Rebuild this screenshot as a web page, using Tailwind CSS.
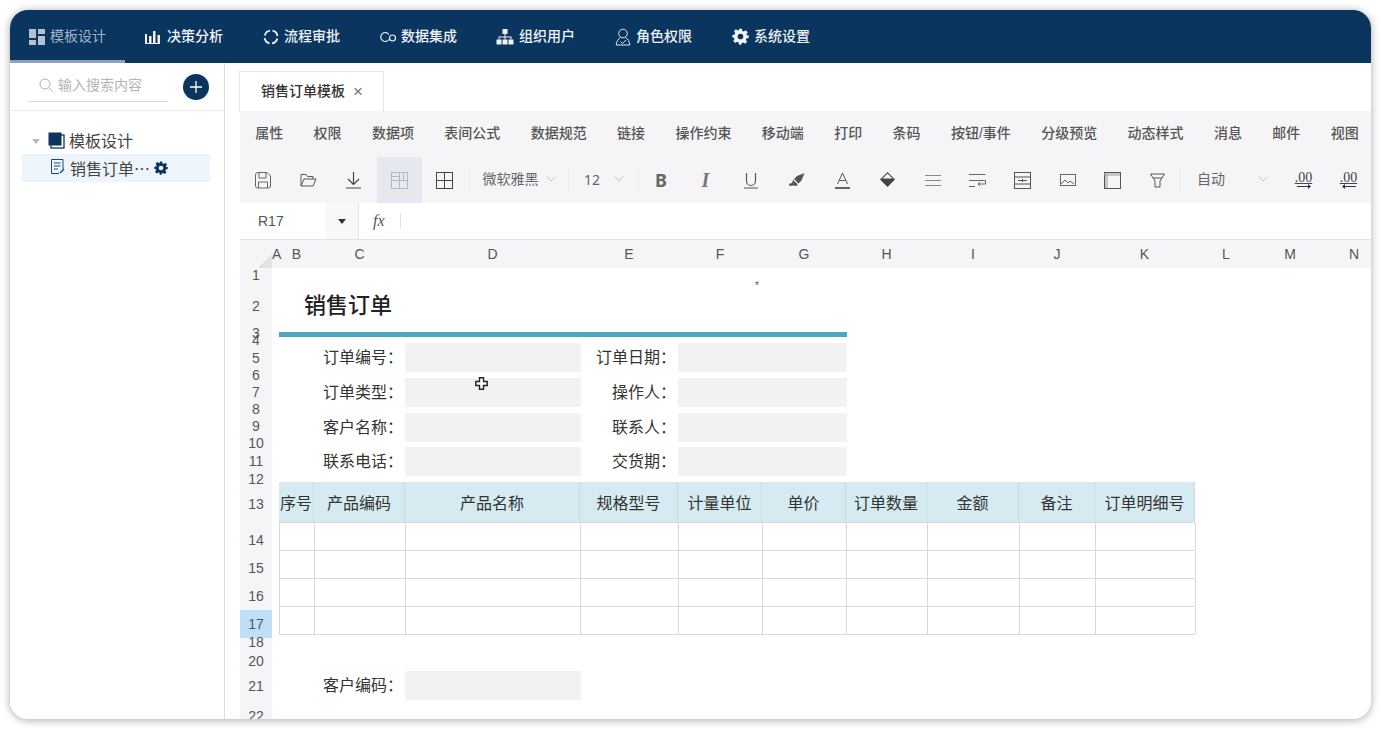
<!doctype html>
<html lang="zh">
<head>
<meta charset="utf-8">
<script src="https://cdn.jsdelivr.net/npm/@tailwindcss/browser@4"></script>
</head>
<body class="bg-white overflow-hidden font-['Liberation_Sans','Noto_Sans_CJK_SC',sans-serif]">
<div class="w-[1382px] h-[733px] pl-[10px] pt-[10px] overflow-hidden">
<div class="w-[1361px] h-[709px] rounded-[18px] overflow-hidden bg-white shadow-[0_1px_9px_rgba(0,0,0,0.35)] flex flex-col relative">

<!-- top nav -->
<header class="h-[53px] shrink-0 bg-[#0a355f] flex text-[14px] font-medium text-[#eef2f6]">
  <div class="w-[115px] border-b-[3px] border-[#8fa2b8] flex items-center pl-[19px] pt-[3px] gap-[5px] text-[#a4b4c6] font-normal">
    <svg class="w-[16px] h-[16px]" viewBox="0 0 16 16" fill="#b5c1ce"><rect width="7" height="9"/><rect x="9" width="7" height="5"/><rect y="11" width="7" height="5"/><rect x="9" y="7" width="7" height="9"/></svg>
    <span>模板设计</span>
  </div>
  <div class="w-[117px] flex items-center pl-[20px] gap-[6px]">
    <svg class="w-[16px] h-[14px]" viewBox="0 0 16 14" fill="#eef2f6"><rect x="0" y="4" width="2" height="9"/><rect x="4" y="6" width="2.5" height="7"/><rect x="8" y="1" width="2.5" height="12"/><rect x="12.500" y="5" width="2.500" height="8"/><rect x="0" y="13" width="15" height="1"/></svg>
    <span>决策分析</span>
  </div>
  <div class="w-[117px] flex items-center pl-[21px] gap-[5px]">
    <svg class="w-[16px] h-[16px]" viewBox="0 0 16 16" fill="none" stroke="#eef2f6" stroke-width="1.800"><path d="M9.500 1.700A6.500 6.500 0 0 1 14.500 7M14.300 9.500A6.500 6.500 0 0 1 9 14.400M6.500 14.300A6.500 6.500 0 0 1 1.600 9M1.800 6.500A6.500 6.500 0 0 1 7 1.600"/></svg>
    <span>流程审批</span>
  </div>
  <div class="w-[117px] flex items-center pl-[20px] gap-[4px]">
    <svg class="w-[18px] h-[12px]" viewBox="0 0 18 12" fill="none" stroke="#eef2f6" stroke-width="1.200"><path d="M10 8.500A4.500 4.500 0 1 1 10 3.500"/><circle cx="13.500" cy="7" r="3"/></svg>
    <span>数据集成</span>
  </div>
  <div class="w-[119px] flex items-center pl-[20px] gap-[5px]">
    <svg class="w-[18px] h-[16px]" viewBox="0 0 18 16" fill="#eef2f6"><rect x="6.500" y="0" width="5" height="5"/><rect x="0.500" y="10.500" width="5" height="5"/><rect x="6.500" y="10.500" width="5" height="5"/><rect x="12.500" y="10.500" width="5" height="5"/><path d="M8.500 5h1v2.500H15.500V10.500h-1V8.500H9.500v2h-1v-2H3.500v2h-1V7.500H8.500z"/></svg>
    <span>组织用户</span>
  </div>
  <div class="w-[116px] flex items-center pl-[20px] gap-[5px]">
    <svg class="w-[16px] h-[18px]" viewBox="0 0 16 18" fill="none" stroke="#dfe6ee" stroke-width="1"><circle cx="8" cy="5.500" r="4.300"/><path d="M5.500 9.500C3 11 1.500 13.500 1.200 17H14.800C14.500 13.500 13 11 10.500 9.500"/><path d="M5.500 13.500l2 2 3.500-3.500"/></svg>
    <span>角色权限</span>
  </div>
  <div class="flex items-center pl-[21px] gap-[5px]">
    <svg class="w-[17px] h-[17px]" viewBox="0 0 24 24" fill="#f2f5f8"><path fill-rule="evenodd" d="M10 1h4l.7 3.200 1.900.8 2.800-1.800 2.800 2.800-1.800 2.800.8 1.900L23.500 10v4l-3.200.7-.8 1.900 1.800 2.800-2.800 2.800-2.800-1.800-1.900.8L13 23.500h-3l-.7-3.200-1.900-.8-2.800 1.800-2.800-2.800 1.800-2.800-.8-1.900L.5 13.500v-3.500l3.200-.7.8-1.900-1.800-2.800 2.800-2.800 2.800 1.800 1.900-.8zM12 8a4 4 0 1 0 0 8 4 4 0 0 0 0-8z"/></svg>
    <span>系统设置</span>
  </div>
</header>

<div class="flex flex-1 min-h-0">
  <!-- sidebar -->
  <aside class="w-[215px] shrink-0 border-r border-[#dcdcdc] bg-white">
    <div class="h-[48px] border-b border-[#ececec] flex items-center pl-[18px]">
      <div class="w-[140px] h-[30px] border-b border-[#d9d9d9] flex items-center pl-[11px] pb-[2px] gap-[5px] text-[14px] text-[#b4b4b4]">
        <svg class="w-[14px] h-[14px]" viewBox="0 0 14 14" fill="none" stroke="#b0b0b0" stroke-width="1"><circle cx="6" cy="6" r="5"/><path d="M9.800 9.800L13.500 13.500"/></svg>
        <span>输入搜索内容</span>
      </div>
      <div class="ml-[15px] w-[26px] h-[26px] rounded-full bg-[#0a355f] flex items-center justify-center">
        <svg class="w-[12px] h-[12px]" viewBox="0 0 12 12" stroke="#fff" stroke-width="1.300"><path d="M6 0V12M0 6H12"/></svg>
      </div>
    </div>
    <div class="pt-[16px] pl-[12px] text-[#444] text-[16px] leading-none">
      <div class="h-[27px] flex items-center pl-[10px] pt-[2px]">
        <span class="w-0 h-0 border-x-[4px] border-x-transparent border-t-[5px] border-t-[#b5b5b5]"></span>
        <svg class="ml-[8px] w-[17px] h-[17px] -mt-[3px]" viewBox="0 0 17 17"><rect x="3" y="3" width="13" height="13" fill="none" stroke="#0a355f" stroke-width="1.300"/><rect x="0.500" y="0.500" width="13" height="13" fill="#0a355f"/></svg>
        <span class="ml-[4px] mt-[1px]">模板设计</span>
      </div>
      <div class="w-[188px] h-[28px] bg-[#eef4fb] flex items-center pl-[28px] text-[16px]">
        <svg class="w-[16px] h-[17px] -mt-[3px]" viewBox="0 0 16 17" fill="none" stroke="#23486e" stroke-width="1"><path d="M13 11V1.500H1.500V15.500H9"/><path d="M4 5H10.500M4 8H10.500M4 11H8"/><path d="M10 15l4-4" stroke-width="1.500"/></svg>
        <span class="ml-[4px] font-['Noto_Sans_CJK_SC',sans-serif]">销售订单…</span>
        <svg class="ml-[4px] w-[14px] h-[14px]" viewBox="0 0 24 24" fill="#0a355f"><path fill-rule="evenodd" d="M10 1h4l.7 3.200 1.900.8 2.800-1.800 2.800 2.800-1.800 2.800.8 1.900L23.500 10v4l-3.200.7-.8 1.900 1.800 2.800-2.800 2.800-2.800-1.800-1.900.8L13 23.500h-3l-.7-3.200-1.900-.8-2.800 1.800-2.800-2.800 1.800-2.800-.8-1.900L.5 13.500v-3.500l3.200-.7.8-1.900-1.800-2.800 2.800-2.800 2.800 1.800 1.900-.8zM12 8a4 4 0 1 0 0 8 4 4 0 0 0 0-8z"/></svg>
      </div>
    </div>
  </aside>

  <!-- main -->
  <main class="flex-1 min-w-0 pl-[15px] flex flex-col overflow-hidden">
    <!-- tab bar -->
    <div class="h-[48px] shrink-0 pt-[8px] flex">
      <div class="w-[145px] h-[40px] -ml-px border border-b-0 border-[#e6e6e6] flex items-center pl-[21px] text-[14px] font-medium text-[#333]">
        <span>销售订单模板</span>
        <span class="ml-[8px] text-[#777] text-[17px] leading-none font-normal">×</span>
      </div>
    </div>
    <!-- toolbar tabs -->
    <div class="h-[46px] shrink-0 bg-[#f5f5f7] flex items-center pb-[2px] text-[14px] text-[#555] font-medium whitespace-nowrap">
      <span class="px-[15.200px]">属性</span>
      <span class="px-[15.200px]">权限</span>
      <span class="px-[15.200px]">数据项</span>
      <span class="px-[15.200px]">表间公式</span>
      <span class="px-[15.200px]">数据规范</span>
      <span class="px-[15.200px]">链接</span>
      <span class="px-[15.200px]">操作约束</span>
      <span class="px-[15.200px]">移动端</span>
      <span class="px-[15.200px]">打印</span>
      <span class="px-[15.200px]">条码</span>
      <span class="px-[15.200px]">按钮/事件</span>
      <span class="px-[15.200px]">分级预览</span>
      <span class="px-[15.200px]">动态样式</span>
      <span class="px-[15.200px]">消息</span>
      <span class="px-[15.200px]">邮件</span>
      <span class="px-[15.200px]">视图</span>
    </div>
    <!-- toolbar icons -->
    <div class="h-[46px] shrink-0 bg-[#f5f5f7] flex text-[14px] text-[#666] whitespace-nowrap">
      <div class="w-[45.500px] flex items-center justify-center"><svg class="w-[16px] h-[17px]" viewBox="0 0 16 17" fill="none" stroke="#666"><path d="M3 .500H12L15.500 4V14a2 2 0 0 1-2 2H2.500a2 2 0 0 1-2-2V3a2.500 2.500 0 0 1 2.500-2.500z"/><path d="M4 1V6H11V1M3.500 16V10H12.500V16"/></svg></div>
      <div class="w-[45.500px] flex items-center justify-center"><svg class="w-[17px] h-[14px]" viewBox="0 0 17 14" fill="none" stroke="#555"><path d="M1 13V1.500H6L7.500 3.500H13V6M1 13H13L16 6H4z"/></svg></div>
      <div class="w-[45.500px] flex items-center justify-center"><svg class="w-[17px] h-[18px]" viewBox="0 0 17 18" fill="none" stroke="#444" stroke-width="1.200"><path d="M8.500 1V13M3 8l5.500 5.500L14 8M1 17H16"/></svg></div>
      <div class="w-[45px] bg-[#e6e8ef] flex items-center justify-center"><svg class="w-[17px] h-[17px]" viewBox="0 0 17 17" fill="none" stroke="#b4b8c0"><rect x=".500" y=".500" width="16" height="16"/><path d="M.500 8.500H16.500M8.500 .500V16.500M12.500 .500V8.500M.500 4.500H8.500"/></svg></div>
      <div class="w-[45px] flex items-center justify-center"><svg class="w-[17px] h-[17px]" viewBox="0 0 17 17" fill="none" stroke="#444"><rect x=".500" y=".500" width="16" height="16"/><path d="M.500 8.500H16.500M8.500 .500V16.500"/></svg></div>
      <div class="w-[101.500px] flex items-center pl-[13px] border-l border-[#ececee] my-[11px] pb-[2px] ml-[2px] -mr-[2px]">
        <span>微软雅黑</span>
        <svg class="ml-[7px] w-[10px] h-[6px]" viewBox="0 0 10 6" fill="none" stroke="#c4c4c4"><path d="M.500 .500L5 5l4.500-4.500"/></svg>
      </div>
      <div class="w-[70px] flex items-center pl-[15px] border-l border-[#ececee] my-[11px] pb-[2px]">
        <span class="text-[14px] font-['Noto_Sans',sans-serif]">12</span>
        <svg class="ml-[14px] w-[10px] h-[6px]" viewBox="0 0 10 6" fill="none" stroke="#c4c4c4"><path d="M.500 .500L5 5l4.500-4.500"/></svg>
      </div>
      <div class="w-[45px] flex items-center justify-center text-[18px] font-bold text-[#666] font-['Noto_Sans',sans-serif] border-l border-[#ececee] my-[11px]">B</div>
      <div class="w-[45px] flex items-center justify-center text-[20px] italic font-bold text-[#777] font-['Liberation_Serif',serif]">I</div>
      <div class="w-[45px] flex items-center justify-center"><svg class="w-[14px] h-[17px]" viewBox="0 0 14 17" fill="none" stroke="#555" stroke-width="1.200"><path d="M2.500 1V9a4.500 4.500 0 0 0 9 0V1M0 16H14"/></svg></div>
      <div class="w-[47px] flex items-center justify-center"><svg class="w-[16px] h-[15px]" viewBox="0 0 16 15" fill="#555"><path d="M15.500 0L8 3 5 6l4.500 4.500 3-3zM4 7l-1 3-3 1 .500 2 4-.500 3.500.500L8.500 11z"/></svg></div>
      <div class="w-[45px] flex items-center justify-center"><svg class="w-[15px] h-[17px]" viewBox="0 0 15 17" fill="none" stroke="#555"><path d="M2.500 12L7.500 1l5 11M4.500 8.500H10.500"/><path d="M0 16H15" stroke="#333" stroke-width="1.300"/></svg></div>
      <div class="w-[45px] flex items-center justify-center"><svg class="w-[16px] h-[16px]" viewBox="0 0 16 16"><path d="M7.500 0L15 7.500 7.500 15 0 7.500z" fill="#444"/><path d="M2.500 6.500L7.500 1.500l5 5z" fill="#f5f5f7"/></svg></div>
      <div class="w-[45px] flex items-center justify-center"><svg class="w-[16px] h-[11px]" viewBox="0 0 16 11" stroke="#888"><path d="M0 .500H16M0 5.500H16M0 10.500H16"/></svg></div>
      <div class="w-[45px] flex items-center justify-center"><svg class="w-[17px] h-[13px]" viewBox="0 0 17 13" fill="none" stroke="#666"><path d="M0 .500H16.500M0 6.500H16.500V10H9M11 8L9 10l2 2M0 12.500H6"/></svg></div>
      <div class="w-[45px] flex items-center justify-center"><svg class="w-[17px] h-[17px]" viewBox="0 0 17 17" fill="none" stroke="#555"><rect x=".500" y=".500" width="16" height="16"/><path d="M.500 5H16.500M.500 12H16.500M4 8.500H13M8.500 7V10"/></svg></div>
      <div class="w-[45px] flex items-center justify-center"><svg class="w-[16px] h-[12px]" viewBox="0 0 16 12" fill="none" stroke="#666"><rect x=".500" y=".500" width="15" height="11"/><path d="M1 10l4-4 3 3 2-2 4 3"/></svg></div>
      <div class="w-[45px] flex items-center justify-center"><svg class="w-[17px] h-[17px]" viewBox="0 0 17 17" fill="none" stroke="#555"><rect x=".500" y=".500" width="16" height="16"/><path d="M.500 2.500H16.500M2.500 2.500V16.500" stroke-width="3" stroke="#999" stroke-dasharray="1 1"/></svg></div>
      <div class="w-[45px] flex items-center justify-center"><svg class="w-[15px] h-[15px]" viewBox="0 0 15 15" fill="none" stroke="#555"><path d="M.500 1H14.500L10 8V14H5V8zM3 5H12"/></svg></div>
      <div class="w-[101px] flex items-center pl-[16px] border-l border-[#ececee] my-[11px] pb-[2px]">
        <span>自动</span>
        <svg class="ml-[33px] w-[10px] h-[6px]" viewBox="0 0 10 6" fill="none" stroke="#c4c4c4"><path d="M.500 .500L5 5l4.500-4.500"/></svg>
      </div>
      <div class="w-[45px] flex flex-col items-center justify-center text-[14px] text-[#444] leading-[13px] font-['Liberation_Serif',serif]"><span class="underline">.00</span><svg class="w-[14px] h-[5px]" viewBox="0 0 14 5" fill="#333"><path d="M0 2H11V0L14 2.500 11 5V3H0z"/></svg></div>
      <div class="w-[45px] flex flex-col items-center justify-center text-[14px] text-[#444] leading-[13px] font-['Liberation_Serif',serif]"><span class="underline">.00</span><svg class="w-[14px] h-[5px]" viewBox="0 0 14 5" fill="#333"><path d="M14 2H3V0L0 2.500 3 5V3H14z"/></svg></div>
    </div>
    <!-- formula bar -->
    <div class="h-[37px] shrink-0 border-b border-[#e3e3e3] flex items-stretch text-[#555]">
      <div class="w-[86px] flex items-center pl-[18px] text-[14px]">R17</div>
      <div class="w-[33px] bg-[#f8f8f8] flex items-center justify-center border-r border-[#e3e3e3]"><span class="w-0 h-0 border-x-[4px] border-x-transparent border-t-[5px] border-t-[#333]"></span></div>
      <div class="w-[41px] flex items-center pl-[14px] italic text-[16px] font-['Liberation_Serif',serif]">fx</div>
      <div class="w-px h-[16px] my-auto bg-[#e3e3e3]"></div>
    </div>
    <!-- column heads -->
    <div class="h-[28px] shrink-0 flex bg-[#f5f5f7] text-[14px] text-[#555]">
      <div class="w-[32px] shrink-0 relative"><svg class="absolute right-0 bottom-0 w-[14px] h-[14px]" viewBox="0 0 14 14" fill="#e2e2e4"><path d="M14 0V14H0z"/></svg></div>
      <div class="grid grid-cols-[7px_35px_91px_175px_98px_84px_84px_81px_92px_76px_99px_64px_64px_64px] items-center text-center whitespace-nowrap">
        <span>A</span><span>B</span><span>C</span><span>D</span><span>E</span><span>F</span><span>G</span><span>H</span><span>I</span><span>J</span><span>K</span><span>L</span><span>M</span><span>N</span>
      </div>
    </div>
    <!-- sheet -->
    <div class="flex-1 min-h-0 flex overflow-hidden">
      <div class="w-[32px] shrink-0 bg-[#f5f5f7] text-[14px] text-[#555] text-center leading-none">
        <div class="h-[13px] flex items-center justify-center">1</div>
        <div class="h-[49px] flex items-center justify-center">2</div>
        <div class="h-[6px] flex items-center justify-center">3</div>
        <div class="h-[8px] flex items-center justify-center">4</div>
        <div class="h-[28px] flex items-center justify-center">5</div>
        <div class="h-[6px] flex items-center justify-center">6</div>
        <div class="h-[28px] flex items-center justify-center">7</div>
        <div class="h-[6px] flex items-center justify-center">8</div>
        <div class="h-[28px] flex items-center justify-center">9</div>
        <div class="h-[6px] flex items-center justify-center">10</div>
        <div class="h-[30px] flex items-center justify-center">11</div>
        <div class="h-[6px] flex items-center justify-center">12</div>
        <div class="h-[44px] flex items-center justify-center">13</div>
        <div class="h-[28px] flex items-center justify-center">14</div>
        <div class="h-[28px] flex items-center justify-center">15</div>
        <div class="h-[28px] flex items-center justify-center">16</div>
        <div class="h-[28px] flex items-center justify-center bg-[#bfdff8]">17</div>
        <div class="h-[8px] flex items-center justify-center">18</div>
        <div class="h-[30px] flex items-center justify-center">20</div>
        <div class="h-[20px] flex items-center justify-center">21</div>
        <div class="h-[40px] flex items-center justify-center">22</div>
      </div>
      <div class="flex-1 min-w-0 relative text-[16px] text-[#333] leading-none">
        <span class="absolute left-[483px] top-[13px] text-[10px] text-[#555]">*</span>
        <svg class="absolute left-[203px] top-[109px] w-[13px] h-[13px]" viewBox="0 0 13 13" fill="#fff" stroke="#222" stroke-width="1.400"><path d="M4.500 .800H8.500V4.500H12.200V8.500H8.500V12.200H4.500V8.500H.800V4.500H4.500z"/></svg>

        <div class="h-[64px] pl-[32px] pt-[26px] text-[22px] font-medium text-[#222] leading-[24px]">销售订单</div>
        <div class="ml-[7px] w-[568px] h-[5px] bg-[#4ea5c0]"></div>

        <div class="ml-[7px] mt-[6px] h-[29px] grid grid-cols-[126px_176px_97px_169px] items-stretch">
          <span class="flex items-center justify-end pr-[2px]">订单编号：</span><span class="bg-[#f2f2f2]"></span><span class="flex items-center justify-end pr-[2px]">订单日期：</span><span class="bg-[#f2f2f2]"></span>
        </div>
        <div class="ml-[7px] mt-[6px] h-[29px] grid grid-cols-[126px_176px_97px_169px] items-stretch">
          <span class="flex items-center justify-end pr-[2px]">订单类型：</span><span class="bg-[#f2f2f2]"></span><span class="flex items-center justify-end pr-[2px]">操作人：</span><span class="bg-[#f2f2f2]"></span>
        </div>
        <div class="ml-[7px] mt-[6px] h-[29px] grid grid-cols-[126px_176px_97px_169px] items-stretch">
          <span class="flex items-center justify-end pr-[2px]">客户名称：</span><span class="bg-[#f2f2f2]"></span><span class="flex items-center justify-end pr-[2px]">联系人：</span><span class="bg-[#f2f2f2]"></span>
        </div>
        <div class="ml-[7px] mt-[5px] h-[29px] grid grid-cols-[126px_176px_97px_169px] items-stretch">
          <span class="flex items-center justify-end pr-[2px]">联系电话：</span><span class="bg-[#f2f2f2]"></span><span class="flex items-center justify-end pr-[2px]">交货期：</span><span class="bg-[#f2f2f2]"></span>
        </div>

        <div class="ml-[7px] mt-[6px] w-[916px]">
          <div class="h-[41px] grid grid-cols-[35px_91px_175px_98px_84px_84px_81px_92px_76px_100px] bg-[#d5ebf1] border-b border-[#d9d9d9] text-center *:flex *:items-center *:justify-center *:pt-[3px] *:border-r *:border-[#c8dde3] whitespace-nowrap">
            <span>序号</span><span>产品编码</span><span>产品名称</span><span>规格型号</span><span>计量单位</span><span>单价</span><span>订单数量</span><span>金额</span><span>备注</span><span>订单明细号</span>
          </div>
          <div class="h-[28px] grid grid-cols-[35px_91px_175px_98px_84px_84px_81px_92px_76px_100px] border-l border-b border-[#d9d9d9] *:border-r *:border-[#d9d9d9]"><i></i><i></i><i></i><i></i><i></i><i></i><i></i><i></i><i></i><i></i></div>
          <div class="h-[28px] grid grid-cols-[35px_91px_175px_98px_84px_84px_81px_92px_76px_100px] border-l border-b border-[#d9d9d9] *:border-r *:border-[#d9d9d9]"><i></i><i></i><i></i><i></i><i></i><i></i><i></i><i></i><i></i><i></i></div>
          <div class="h-[28px] grid grid-cols-[35px_91px_175px_98px_84px_84px_81px_92px_76px_100px] border-l border-b border-[#d9d9d9] *:border-r *:border-[#d9d9d9]"><i></i><i></i><i></i><i></i><i></i><i></i><i></i><i></i><i></i><i></i></div>
          <div class="h-[28px] grid grid-cols-[35px_91px_175px_98px_84px_84px_81px_92px_76px_100px] border-l border-b border-[#d9d9d9] *:border-r *:border-[#d9d9d9]"><i></i><i></i><i></i><i></i><i></i><i></i><i></i><i></i><i></i><i></i></div>
        </div>

        <div class="ml-[7px] mt-[36px] h-[29px] grid grid-cols-[126px_176px] items-stretch">
          <span class="flex items-center justify-end pr-[2px]">客户编码：</span><span class="bg-[#f2f2f2]"></span>
        </div>
      </div>
    </div>
  </main>
</div>
</div>
</div>
</body>
</html>
